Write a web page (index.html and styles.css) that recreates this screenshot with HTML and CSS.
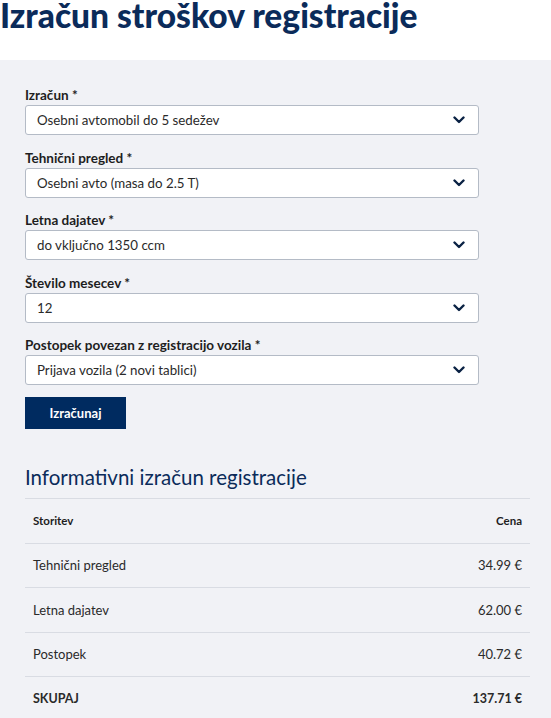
FILE: index.html
```html
<!DOCTYPE html>
<html lang="sl">
<head>
<meta charset="utf-8">
<title>Izračun stroškov registracije</title>
<link rel="stylesheet" href="styles.css">
</head>
<body>
<h1 class="title">Izračun stroškov registracije</h1>
<main class="panel">
  <form class="form">
    <div class="field">
      <div class="label">Izračun *</div>
      <div class="select"><span>Osebni avtomobil do 5 sedežev</span><svg class="chev" width="12" height="8" viewBox="0 0 12 8"><path d="M1.5 1.5 L6 6 L10.5 1.5" fill="none" stroke="#0a2244" stroke-width="2.4" stroke-linecap="round" stroke-linejoin="round"/></svg></div>
    </div>
    <div class="field">
      <div class="label">Tehnični pregled *</div>
      <div class="select"><span>Osebni avto (masa do 2.5 T)</span><svg class="chev" width="12" height="8" viewBox="0 0 12 8"><path d="M1.5 1.5 L6 6 L10.5 1.5" fill="none" stroke="#0a2244" stroke-width="2.4" stroke-linecap="round" stroke-linejoin="round"/></svg></div>
    </div>
    <div class="field">
      <div class="label">Letna dajatev *</div>
      <div class="select"><span>do vključno 1350 ccm</span><svg class="chev" width="12" height="8" viewBox="0 0 12 8"><path d="M1.5 1.5 L6 6 L10.5 1.5" fill="none" stroke="#0a2244" stroke-width="2.4" stroke-linecap="round" stroke-linejoin="round"/></svg></div>
    </div>
    <div class="field">
      <div class="label">Število mesecev *</div>
      <div class="select"><span>12</span><svg class="chev" width="12" height="8" viewBox="0 0 12 8"><path d="M1.5 1.5 L6 6 L10.5 1.5" fill="none" stroke="#0a2244" stroke-width="2.4" stroke-linecap="round" stroke-linejoin="round"/></svg></div>
    </div>
    <div class="field">
      <div class="label">Postopek povezan z registracijo vozila *</div>
      <div class="select"><span>Prijava vozila (2 novi tablici)</span><svg class="chev" width="12" height="8" viewBox="0 0 12 8"><path d="M1.5 1.5 L6 6 L10.5 1.5" fill="none" stroke="#0a2244" stroke-width="2.4" stroke-linecap="round" stroke-linejoin="round"/></svg></div>
    </div>
    <div class="actions"><button type="button" class="btn">Izračunaj</button></div>
  </form>
  <section class="result">
    <h2 class="result-title">Informativni izračun registracije</h2>
    <div class="table">
      <div class="row head"><span>Storitev</span><span>Cena</span></div>
      <div class="row"><span>Tehnični pregled</span><span>34.99 €</span></div>
      <div class="row"><span>Letna dajatev</span><span>62.00 €</span></div>
      <div class="row"><span>Postopek</span><span>40.72 €</span></div>
      <div class="row total"><span>SKUPAJ</span><span>137.71 €</span></div>
    </div>
  </section>
</main>
</body>
</html>
```
FILE: styles.css
```css
html, body {
  margin: 0;
  padding: 0;
  background: #ffffff;
}
body {
  font-family: Lato, "Liberation Sans", sans-serif;
  color: #222;
  height: 718px;
  overflow: hidden;
}
.title {
  margin: 0;
  height: 60px;
  font-size: 33.5px;
  line-height: 31px;
  font-weight: 900;
  color: #0b2b5a;
  white-space: nowrap;
}
.panel {
  background: #f1f2f6;
  padding: 28px 25px 0 25px;
  height: 630px;
}
.form {
  width: 454px;
  display: flex;
  flex-direction: column;
}
.field {
  display: flex;
  flex-direction: column;
  gap: 3px;
  margin-bottom: 15.5px;
}
.label {
  font-size: 13.5px;
  font-weight: 700;
  line-height: 14px;
  color: #1e1e1e;
}
.select {
  box-sizing: border-box;
  height: 30px;
  background: #fff;
  border: 1px solid #b4bbc6;
  border-radius: 3px;
  padding: 0 13px 0 11px;
  display: flex;
  align-items: center;
  justify-content: space-between;
  font-size: 13.3px;
  color: #2a2a2a;
}
.chev { display: block; }
.actions { margin-top: -3.5px; }
.btn {
  display: block;
  width: 101px;
  height: 32px;
  border: 0;
  background: #002b60;
  color: #fff;
  font-family: inherit;
  font-size: 13px;
  font-weight: 700;
  padding: 0;
}
.result { margin-top: 36px; width: 505px; }
.result-title {
  margin: 0 0 9px 0;
  font-size: 20.5px;
  line-height: 24px;
  font-weight: 400;
  color: #0b2b5a;
}
.table { border-top: 1px solid #d9dce3; }
.row {
  display: flex;
  justify-content: space-between;
  height: 43.5px;
  align-items: center;
  padding: 0 8px;
  border-bottom: 1px solid #d9dce3;
  font-size: 13px;
  color: #2a2a2a;
}
.row.head { font-size: 11.5px; font-weight: 700; color: #1e1e1e; }
.row.total { font-weight: 700; font-size: 12.5px; border-bottom: 0; }
```
